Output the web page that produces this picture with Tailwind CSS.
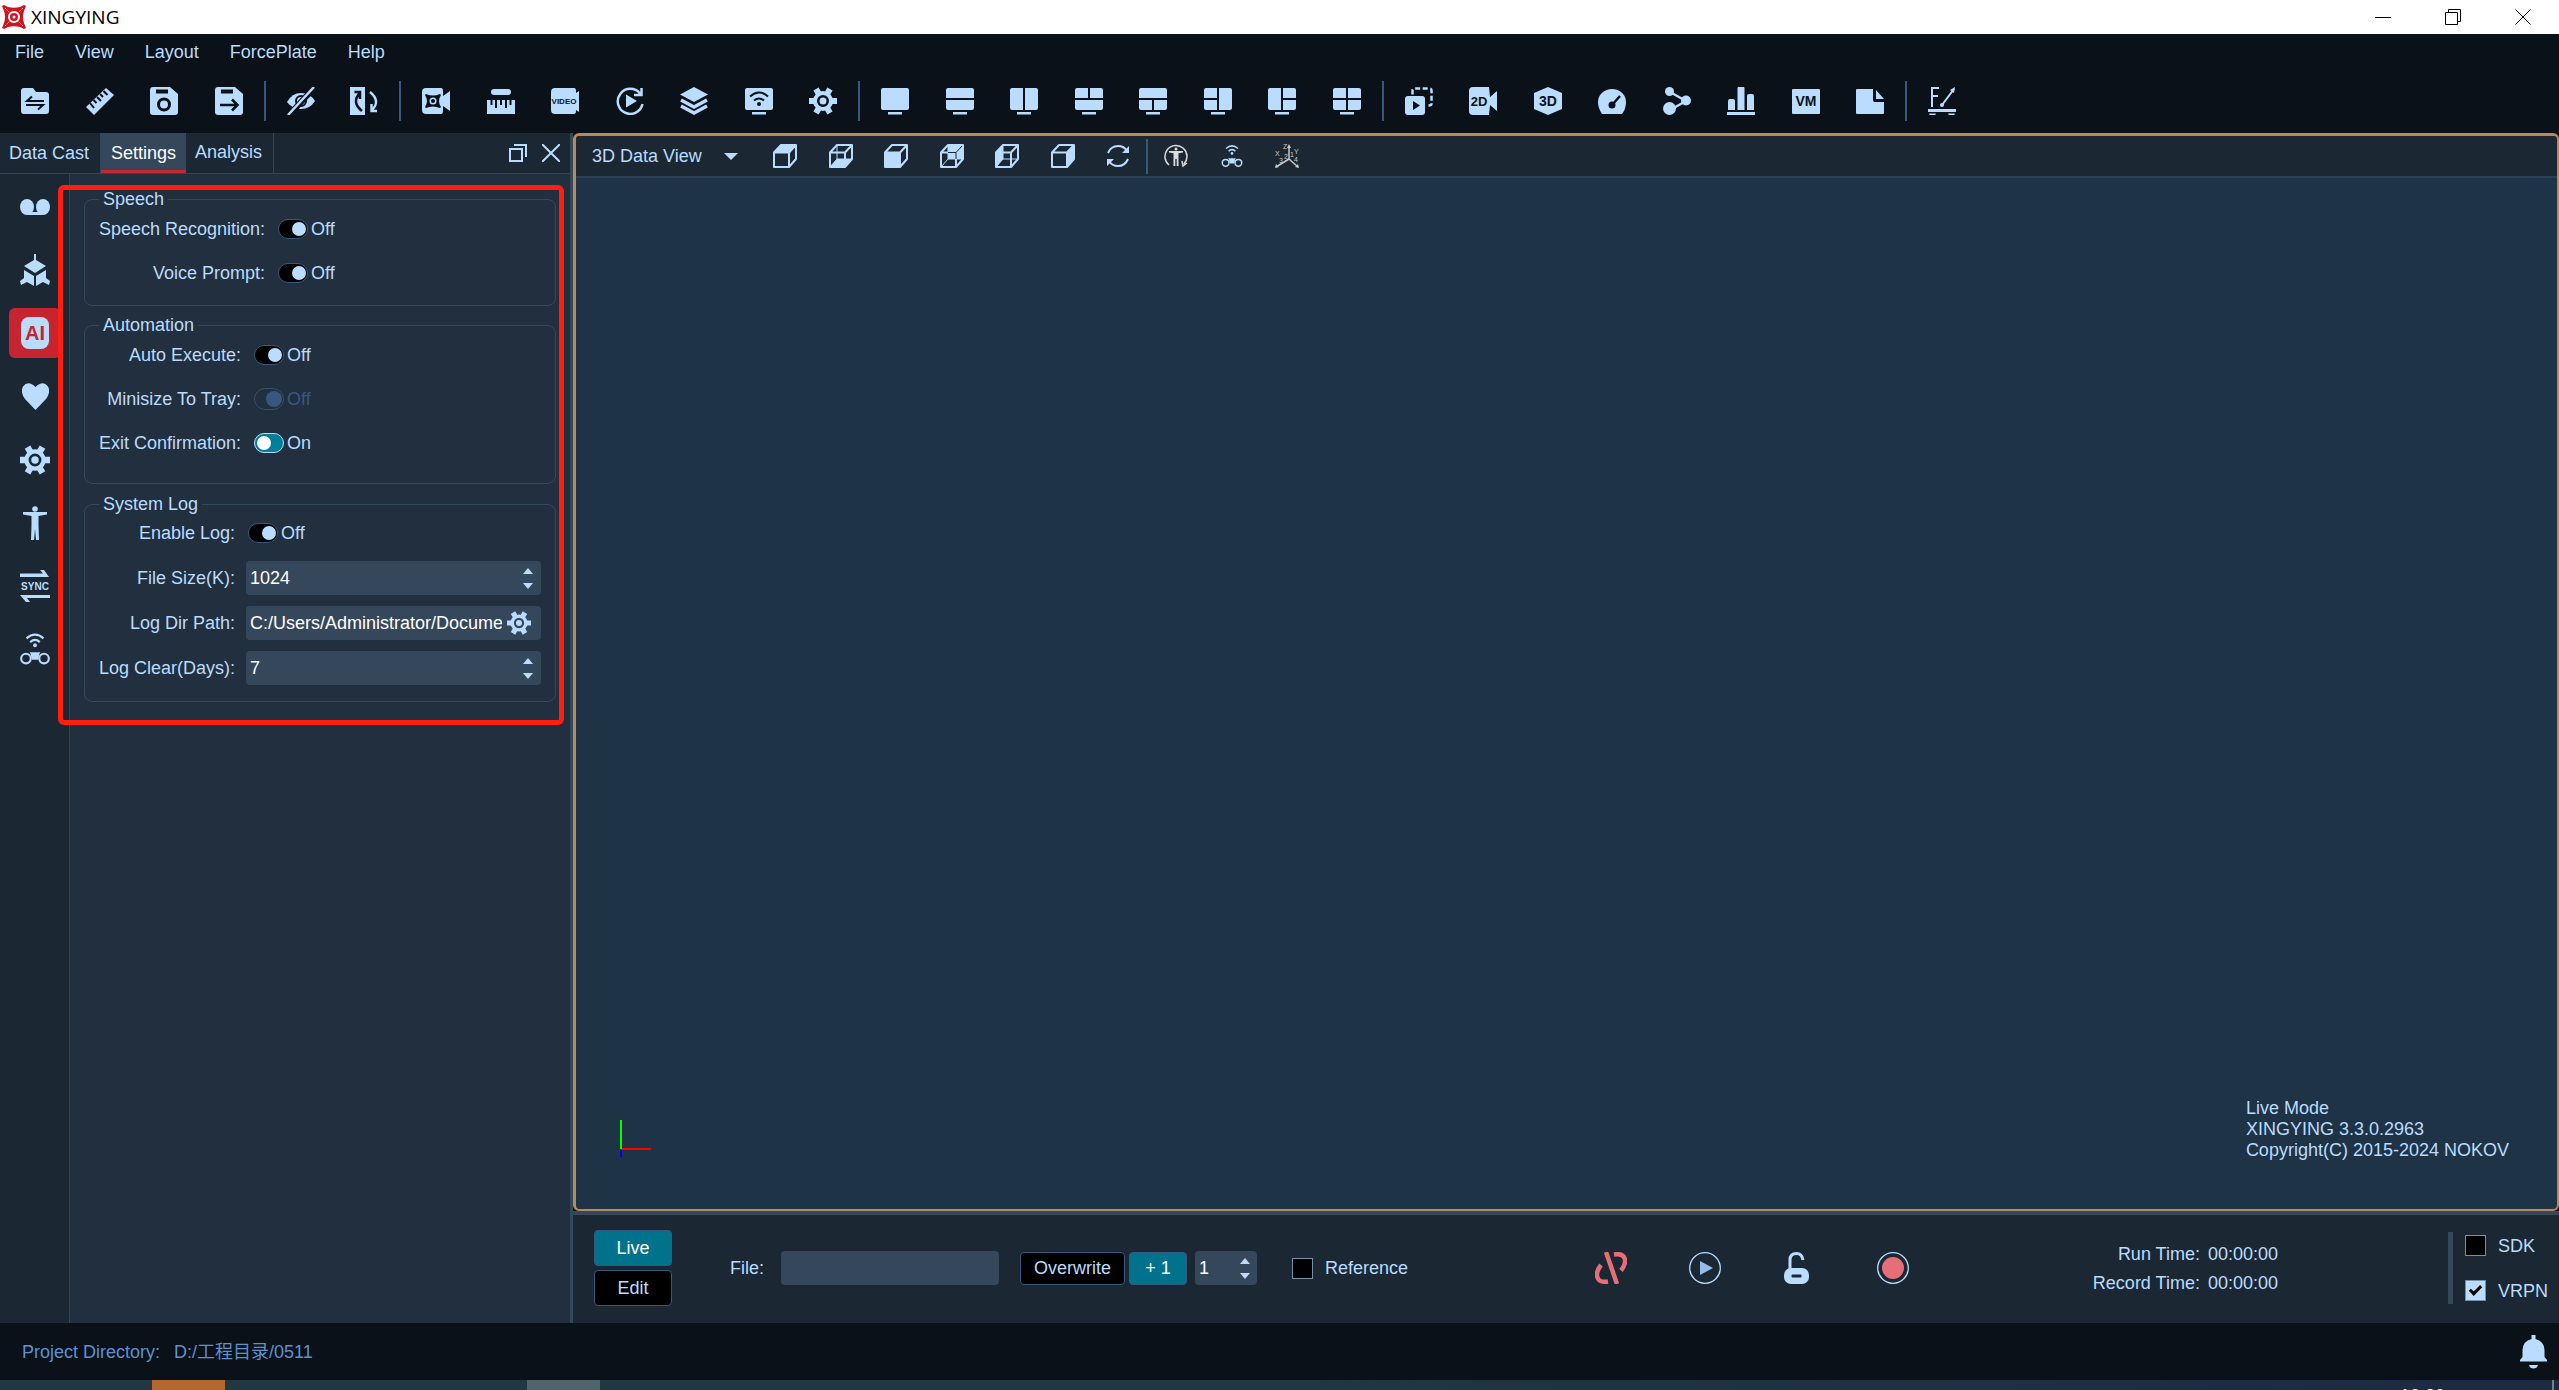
<!DOCTYPE html>
<html lang="en">

<head>
    <meta charset="UTF-8">
    <meta name="viewport" content="width=device-width, initial-scale=1.0">
    <script src="https://cdn.jsdelivr.net/npm/@tailwindcss/browser@4"></script>
    <title>XINGYING</title>
</head>

<body class="flex flex-col h-screen overflow-hidden bg-[#0a1118] text-[#badcff] text-lg leading-6 font-['Liberation_Sans','Noto_Sans_CJK_SC',sans-serif]">

    <!-- shared icons -->
    <svg class="hidden">
        <symbol id="gear" viewBox="0 0 28 28">
            <g fill="none" stroke="currentColor">
                <circle cx="14" cy="14" r="8" stroke-width="4" />
                <path stroke-width="6" d="M0 14h5M23 14h5M18.500 21.800l2.500 4.300M9.500 21.800L7 26.100M18.500 6.200L21 1.900M9.500 6.200L7 1.900" />
            </g>
            <circle cx="14" cy="14" r="3.500" fill="currentColor" />
        </symbol>
        <symbol id="drone" viewBox="0 0 28 32">
            <g fill="none" stroke="currentColor" stroke-width="2">
                <path d="M6 6q8-7 16 0M9.500 9.500q4.500-4 9 0" />
                <circle cx="5.500" cy="25" r="4.500" />
                <circle cx="22.500" cy="25" r="4.500" />
            </g>
            <circle cx="14" cy="12.500" r="1.800" fill="currentColor" />
            <path fill="currentColor" d="M9 19h10l-1 2-1 5h-6l-1-5z" />
        </symbol>
        <symbol id="cube" viewBox="0 0 24 24">
            <path fill="none" stroke="currentColor" stroke-width="2" stroke-linejoin="round" d="M1 8.500L8 1h15v14l-7 8H1zM1 8.500h15V23M16 8.500L23 1" />
        </symbol>
        <symbol id="cubeback" viewBox="0 0 24 24">
            <path fill="none" stroke="currentColor" stroke-width="1" d="M8 1v14h15M8 15l-7 8" />
        </symbol>
        <symbol id="up" viewBox="0 0 10 6">
            <path fill="currentColor" d="M0 6L5 0l5 6z" />
        </symbol>
        <symbol id="down" viewBox="0 0 10 6">
            <path fill="currentColor" d="M0 0h10L5 6z" />
        </symbol>
        <symbol id="stand" viewBox="0 0 28 28">
            <path fill="currentColor" d="M7 25h14v2.500H7z" />
        </symbol>
    </svg>

    <!-- title bar -->
    <header class="flex items-center h-[34px] shrink-0 bg-white text-black pl-[2px]">
        <svg class="size-6" viewBox="0 0 24 24">
            <path fill="#d0141f" d="M0 1l2-1 4 2q6 1.500 12 0l4-2 2 1-2 5q-2 6 0 12l2 5-2 1-4-2q-6-1.500-12 0l-4 2-2-1 2-5q2-6 0-12z" />
            <circle cx="12" cy="12" r="5" fill="none" stroke="#fff" stroke-width="2" />
            <circle cx="12" cy="12" r="1.500" fill="#fff" />
            <path stroke="#fff" stroke-dasharray="1 1.500" d="M3 3l5 5M21 3l-5 5M3 21l5-5M21 21l-5-5" />
        </svg>
        <h1 class="ml-[5px] text-[19px] font-['Open_Sans',sans-serif]">XINGYING</h1>
        <div class="flex items-center gap-[54px] ml-auto pr-[28px]">
            <button type="button" aria-label="Minimize"><svg class="size-4" viewBox="0 0 16 16"><path stroke="#000" d="M0 8.500h16" /></svg></button>
            <button type="button" aria-label="Restore"><svg class="size-4" viewBox="0 0 16 16" fill="none" stroke="#000"><path d="M.5 3.500h12v12H.5zM3.500 3.500v-3h12v12h-3" /></svg></button>
            <button type="button" aria-label="Close"><svg class="size-4" viewBox="0 0 16 16" stroke="#000"><path d="M.5.5l15 15M15.500.5l-15 15" /></svg></button>
        </div>
    </header>

    <!-- menu -->
    <nav class="flex items-center gap-[31px] h-[35px] shrink-0 pl-[15px]">
        <button type="button">File</button>
        <button type="button">View</button>
        <button type="button">Layout</button>
        <button type="button">ForcePlate</button>
        <button type="button">Help</button>
    </nav>

    <!-- toolbar -->
    <div class="flex items-center gap-[21px] h-16 shrink-0 pl-[21px]">
        <div class="flex justify-between w-[222px]">
            <button type="button" aria-label="Open project"><svg class="size-7" viewBox="0 0 28 28"><path fill="currentColor" d="M3 1h9l3 4h10a3 3 0 0 1 3 3v16a3 3 0 0 1-3 3H3a3 3 0 0 1-3-3V4a3 3 0 0 1 3-3z" /><path fill="none" stroke="#0a1118" stroke-width="2" d="M23 14H6l5-4.500M5 18h17l-5 4.500" /></svg></button>
            <button type="button" aria-label="Calibrate"><svg class="size-7" viewBox="0 0 28 28"><path fill="currentColor" d="M0 20L20 1l8 7L8 28z" /><path stroke="#0a1118" stroke-width="2" d="M4 16l4 5M7.500 13l3 3M11 10l4 4M14 7l3 3M17.500 4l4 4" /></svg></button>
            <button type="button" aria-label="Save"><svg class="size-7" viewBox="0 0 28 28"><path fill="currentColor" d="M3 0h17l8 7v18a3 3 0 0 1-3 3H3a3 3 0 0 1-3-3V3a3 3 0 0 1 3-3z" /><path stroke="#0a1118" stroke-width="4" d="M6 4.500h12" /><circle cx="14" cy="17.500" r="5.500" fill="none" stroke="#0a1118" stroke-width="3" /></svg></button>
            <button type="button" aria-label="Save as"><svg class="size-7" viewBox="0 0 28 28"><path fill="currentColor" d="M3 0h17l8 7v18a3 3 0 0 1-3 3H3a3 3 0 0 1-3-3V3a3 3 0 0 1 3-3z" /><path stroke="#0a1118" stroke-width="4" d="M6 4.500h12" /><path fill="none" stroke="#0a1118" stroke-width="2.500" d="M5 18h17M17 12.500l5.500 5.500-5.500 5.500" /></svg></button>
        </div>
        <div class="w-[2px] h-10 bg-[#36587f]"></div>
        <div class="flex justify-between w-[91px]">
            <button type="button" aria-label="Hide"><svg class="size-7" viewBox="0 0 28 28"><path fill="currentColor" d="M0 15Q5 6 14 6t14 8Q23 22 14 22T0 15z" /><circle cx="14" cy="14" r="5" fill="none" stroke="#0a1118" stroke-width="2" /><path stroke="#0a1118" stroke-width="6" d="M2 28L27 1" /><path stroke="currentColor" stroke-width="2.500" d="M1 28L27 0" /></svg></button>
            <button type="button" aria-label="Flip"><svg class="size-7" viewBox="0 0 28 28"><path fill="currentColor" d="M0 0h15v28H0z" /><path fill="none" stroke="#0a1118" stroke-width="2.500" d="M12 24q-11-9-2-18M4.500 5H10v7" /><path fill="none" stroke="currentColor" stroke-width="2.500" d="M20 5q11 9 2 18M27 24h-5.500V17" /></svg></button>
        </div>
        <div class="w-[2px] h-10 bg-[#36587f]"></div>
        <div class="flex justify-between w-[415px]">
            <button type="button" aria-label="Cameras"><svg class="size-7" viewBox="0 0 28 28"><path fill="currentColor" d="M4 1h15q2 0 2 3v5l7-5v20l-7-5v5q0 3-2 3H4a4 4 0 0 1-4-4V5a4 4 0 0 1 4-4z" /><path fill="#0a1118" d="M4 7q7 3 14 0l1 1q-4 6 0 12l-1 1q-7-3-14 0l-1-1q4-6 0-12z" /><circle cx="11" cy="14" r="2.800" fill="none" stroke="currentColor" stroke-width="1.500" /></svg></button>
            <button type="button" aria-label="Wand"><svg class="size-7" viewBox="0 0 28 28"><rect x="4" y="2" width="20" height="6" rx="3" fill="currentColor" /><path fill="currentColor" d="M0 13h28v14H0z" /><path stroke="#0a1118" stroke-width="2" d="M4.500 13v5M9 13v8M14 13v5M19 13v8M23.500 13v5" /></svg></button>
            <button type="button" aria-label="Video"><svg class="size-7" viewBox="0 0 28 28"><path fill="currentColor" d="M4 1h19q2 0 2 3v2l3-2v21l-3-2v1q0 3-2 3H4a4 4 0 0 1-4-4V5a4 4 0 0 1 4-4z" /><text x="13" y="17" text-anchor="middle" fill="#0a1118" class="text-[8px] font-bold">VIDEO</text></svg></button>
            <button type="button" aria-label="Replay"><svg class="size-7" viewBox="0 0 28 28"><path fill="none" stroke="currentColor" stroke-width="2.500" d="M26.500 17A12.500 12.500 0 1 1 24 6.500M25.500 1v7H18" /><path fill="currentColor" d="M10 7.500L21 14l-11 6.500z" /></svg></button>
            <button type="button" aria-label="Layers"><svg class="size-7" viewBox="0 0 28 28"><path fill="currentColor" d="M14 0l14 7.500L14 15 0 7.500z" /><path fill="none" stroke="currentColor" stroke-width="3.500" d="M1 13l13 7 13-7M1 19l13 7 13-7" /></svg></button>
            <button type="button" aria-label="Network"><svg class="size-7" viewBox="0 0 28 28"><rect y="1" width="28" height="22" rx="2" fill="currentColor" /><use href="#stand" /><path fill="none" stroke="#0a1118" stroke-width="2" d="M5 9.500q9-8 18 0M9 13.500q5-4 10 0" /><circle cx="14" cy="17" r="2" fill="#0a1118" /></svg></button>
            <button type="button" aria-label="Settings"><svg class="size-7"><use href="#gear" /></svg></button>
        </div>
        <div class="w-[2px] h-10 bg-[#36587f]"></div>
        <div class="flex justify-between w-[480px]">
            <button type="button" aria-label="One view"><svg class="size-7" viewBox="0 0 28 28"><rect y="1" width="28" height="22" rx="2" fill="currentColor" /><use href="#stand" /></svg></button>
            <button type="button" aria-label="Two rows"><svg class="size-7" viewBox="0 0 28 28"><rect y="1" width="28" height="22" rx="2" fill="currentColor" /><use href="#stand" /><path stroke="#0a1118" stroke-width="2" d="M0 12h28" /></svg></button>
            <button type="button" aria-label="Two columns"><svg class="size-7" viewBox="0 0 28 28"><rect y="1" width="28" height="22" rx="2" fill="currentColor" /><use href="#stand" /><path stroke="#0a1118" stroke-width="2" d="M14 1v22" /></svg></button>
            <button type="button" aria-label="Two above one"><svg class="size-7" viewBox="0 0 28 28"><rect y="1" width="28" height="22" rx="2" fill="currentColor" /><use href="#stand" /><path stroke="#0a1118" stroke-width="2" d="M0 12h28M14 1v11" /></svg></button>
            <button type="button" aria-label="One above two"><svg class="size-7" viewBox="0 0 28 28"><rect y="1" width="28" height="22" rx="2" fill="currentColor" /><use href="#stand" /><path stroke="#0a1118" stroke-width="2" d="M0 12h28M14 12v11" /></svg></button>
            <button type="button" aria-label="Two left, one right"><svg class="size-7" viewBox="0 0 28 28"><rect y="1" width="28" height="22" rx="2" fill="currentColor" /><use href="#stand" /><path stroke="#0a1118" stroke-width="2" d="M0 12h14M14 1v22" /></svg></button>
            <button type="button" aria-label="One left, two right"><svg class="size-7" viewBox="0 0 28 28"><rect y="1" width="28" height="22" rx="2" fill="currentColor" /><use href="#stand" /><path stroke="#0a1118" stroke-width="2" d="M14 12h14M14 1v22" /></svg></button>
            <button type="button" aria-label="Four views"><svg class="size-7" viewBox="0 0 28 28"><rect y="1" width="28" height="22" rx="2" fill="currentColor" /><use href="#stand" /><path stroke="#0a1118" stroke-width="2" d="M0 12h28M14 1v22" /></svg></button>
        </div>
        <div class="w-[2px] h-10 bg-[#36587f]"></div>
        <div class="flex justify-between w-[479px]">
            <button type="button" aria-label="Playback view"><svg class="size-7" viewBox="0 0 28 28"><rect y="9" width="20" height="19" rx="3" fill="currentColor" /><path fill="#0a1118" d="M8 14l7 4.500L8 23z" /><path fill="none" stroke="currentColor" stroke-width="2.500" stroke-dasharray="5 2.500" d="M7.500 7.500V3.500q0-2 2-2h15q2 0 2 2v13q0 2-3 2" /></svg></button>
            <button type="button" aria-label="2D view"><svg class="size-7" viewBox="0 0 28 28"><path fill="currentColor" d="M4 0h16l1 10 7-6v20l-7-6-1 10H4a4 4 0 0 1-4-4V4a4 4 0 0 1 4-4z" /><text x="10" y="19" text-anchor="middle" fill="#0a1118" class="text-[13px] font-bold">2D</text></svg></button>
            <button type="button" aria-label="3D view"><svg class="size-7" viewBox="0 0 28 28"><path fill="currentColor" d="M14 0l14 6v16l-14 6-14-6V6z" /><text x="14" y="19" text-anchor="middle" fill="#0a1118" class="text-[14px] font-bold">3D</text></svg></button>
            <button type="button" aria-label="Gauge"><svg class="size-7" viewBox="0 0 28 28"><path fill="currentColor" d="M4 27Q0 21 0 15a14 13 0 0 1 28 0q0 7-4 12z" /><circle cx="14" cy="18" r="3.500" fill="#0a1118" /><path stroke="#0a1118" stroke-width="2.500" d="M14 18l8-9" /></svg></button>
            <button type="button" aria-label="Nodes"><svg class="size-7" viewBox="0 0 28 28"><path fill="none" stroke="currentColor" stroke-width="2.500" d="M7 5l16 9L7 23" /><circle cx="6.500" cy="4.500" r="4.500" fill="currentColor" /><circle cx="23" cy="13.500" r="5" fill="currentColor" /><circle cx="6.500" cy="21.500" r="6.500" fill="currentColor" /></svg></button>
            <button type="button" aria-label="Chart"><svg class="size-7" viewBox="0 0 28 28"><path fill="currentColor" d="M1 14q0-2 2-2h3q2 0 2 2v9H1zM10.500 1.500q0-2 2-2h3q2 0 2 2V23h-7zM20 9q0-2 2-2h3q2 0 2 2v14h-7zM0 25h28v3H0z" /></svg></button>
            <button type="button" aria-label="Virtual markers"><svg class="size-7" viewBox="0 0 28 28"><rect y="2" width="28" height="25" rx="1" fill="currentColor" /><text x="14" y="19" text-anchor="middle" fill="#0a1118" class="text-[14px] font-bold">VM</text></svg></button>
            <button type="button" aria-label="Notes"><svg class="size-7" viewBox="0 0 28 28"><path fill="currentColor" d="M1 2h16v11q0 2 2 2h9v11q0 1-1 1H1q-1 0-1-1V3q0-1 1-1zM20 3l8 9h-8z" /></svg></button>
        </div>
        <div class="w-[2px] h-10 bg-[#36587f]"></div>
        <button type="button" aria-label="Force plate"><svg class="size-7" viewBox="0 0 28 28"><path fill="none" stroke="currentColor" stroke-width="2" d="M4 20V1h7M4 9h6M14 18L26 2" /><path fill="currentColor" d="M27 0l-1 6-4-3zM0 22h28v3H0zM1 26.500h7l-1 2H2zM20 26.500h7l-1 2h-5z" /><circle cx="14" cy="18" r="2" fill="currentColor" /></svg></button>
    </div>

    <div class="flex flex-1 min-h-0">
        <!-- left dock -->
        <aside class="relative flex flex-col w-[573px] shrink-0 border-r-[3px] border-[#34485c] bg-[#212f3e]">
            <div class="flex items-stretch h-[41px] shrink-0 bg-[#1b2834] border-b border-[#30465a]">
                <button type="button" class="w-[101px] pr-[2px] border-r border-[#30465a]">Data Cast</button>
                <button type="button" class="w-[85px] pt-[2px] bg-[#35475b] text-white border-b-3 border-[#c9252d]">Settings</button>
                <button type="button" class="w-[88px] pr-[2px] pb-[2px] border-r border-[#30465a]">Analysis</button>
                <div class="flex items-center gap-[15px] ml-auto pr-[10px]">
                    <button type="button" aria-label="Float"><svg class="size-[18px]" viewBox="0 0 18 18" fill="none" stroke="currentColor" stroke-width="2"><path d="M1 5h12v12H1zM5 1h12v12" /></svg></button>
                    <button type="button" aria-label="Close panel"><svg class="size-[18px]" viewBox="0 0 18 18" stroke="currentColor" stroke-width="2"><path d="M0 0l18 18M18 0L0 18" /></svg></button>
                </div>
            </div>

            <div class="flex flex-1">
                <nav class="flex flex-col gap-[18px] w-[70px] pl-[9px] pt-[10px] bg-[#1b2834] border-r border-[#30465a]">
                    <button type="button" aria-label="Markers" class="flex items-center justify-center w-[52px] h-[45px]"><svg class="w-[30px] h-4" viewBox="0 0 30 16"><ellipse cx="7" cy="8" rx="7" ry="8" fill="currentColor" /><ellipse cx="23" cy="8" rx="7" ry="8" fill="currentColor" /><path fill="currentColor" d="M7 16l5-3h6l5 3z" /></svg></button>
                    <button type="button" aria-label="Rigid body" class="flex items-center justify-center w-[52px] h-[45px]"><svg class="w-[30px] h-8" viewBox="0 0 30 32"><path fill="currentColor" d="M14 0h2v6l10 6-11 7-11-7 10-6zM4 16l10 6v10l-7-4-6 3-1-4 4-3zM26 16l-10 6v10l7-4 6 3 1-4-4-3z" /></svg></button>
                    <button type="button" aria-label="AI" class="flex items-center justify-center w-[52px] h-[50px] -my-[2px] rounded-md bg-[#c6252f]"><svg class="w-7 h-8" viewBox="0 0 28 32"><rect width="28" height="32" rx="8" fill="currentColor" /><text x="14" y="23" text-anchor="middle" fill="#c6252f" class="text-[20px] font-bold">AI</text></svg></button>
                    <button type="button" aria-label="Favorites" class="flex items-center justify-center w-[52px] h-[45px]"><svg class="w-[27px] h-[27px]" viewBox="0 0 27 27"><path fill="currentColor" d="M13.500 27L3 16Q-2 9 1 3.500q5-6.500 12.500.5Q21-3 26 3.500q3 5.500-2 12.500z" /></svg></button>
                    <button type="button" aria-label="General" class="flex items-center justify-center w-[52px] h-[45px]"><svg class="size-[30px]"><use href="#gear" /></svg></button>
                    <button type="button" aria-label="Skeleton" class="flex items-center justify-center w-[52px] h-[45px]"><svg class="w-6 h-[34px]" viewBox="0 0 24 34"><circle cx="12" cy="3" r="2.800" fill="currentColor" /><path fill="currentColor" d="M0 6h24v2.500l-8.500 1.500v9L16 34h-3l-1-11-1 11H8l.5-15v-9L0 8.500z" /></svg></button>
                    <button type="button" aria-label="Sync" class="flex items-center justify-center w-[52px] h-[45px]"><svg class="w-[30px] h-8" viewBox="0 0 30 32"><path fill="currentColor" d="M0 3.500h23L20 0h4l5 7H0zM30 28H7l3 4H6l-6-7h30z" /><text x="15" y="20" text-anchor="middle" fill="currentColor" class="text-[10px] font-bold">SYNC</text></svg></button>
                    <button type="button" aria-label="Drone" class="flex items-center justify-center w-[52px] h-[45px]"><svg class="w-[30px] h-[34px]"><use href="#drone" /></svg></button>
                </nav>

                <form class="flex-1 pt-[13px] px-[14px]">
                    <fieldset class="h-[119px] px-[14px] border border-[#34485c] rounded-lg">
                        <legend class="px-1">Speech</legend>
                        <div class="grid grid-cols-[166px_auto] justify-start items-center gap-x-[13px] gap-y-5 pt-[6px]">
                            <label for="speech" class="text-right whitespace-nowrap">Speech Recognition:</label>
                            <div class="flex items-center gap-[3px]"><input type="checkbox" id="speech" class="appearance-none flex items-center justify-end w-[30px] h-5 px-px rounded-full bg-black border border-[#36587f] before:size-[14px] before:rounded-full before:bg-[#badcff] before:content-['']"><span>Off</span></div>
                            <label for="voice" class="text-right whitespace-nowrap">Voice Prompt:</label>
                            <div class="flex items-center gap-[3px]"><input type="checkbox" id="voice" class="appearance-none flex items-center justify-end w-[30px] h-5 px-px rounded-full bg-black border border-[#36587f] before:size-[14px] before:rounded-full before:bg-[#badcff] before:content-['']"><span>Off</span></div>
                        </div>
                    </fieldset>

                    <fieldset class="h-[171px] mt-[7px] px-[14px] border border-[#34485c] rounded-lg">
                        <legend class="px-1">Automation</legend>
                        <div class="grid grid-cols-[142px_auto] justify-start items-center gap-x-[13px] gap-y-5 pt-[6px]">
                            <label for="auto" class="text-right whitespace-nowrap">Auto Execute:</label>
                            <div class="flex items-center gap-[3px]"><input type="checkbox" id="auto" class="appearance-none flex items-center justify-end w-[30px] h-5 px-px rounded-full bg-black border border-[#36587f] before:size-[14px] before:rounded-full before:bg-[#badcff] before:content-['']"><span>Off</span></div>
                            <label for="tray" class="text-right whitespace-nowrap">Minisize To Tray:</label>
                            <div class="flex items-center gap-[3px]"><input type="checkbox" id="tray" disabled class="appearance-none flex items-center justify-end w-[30px] h-[22px] px-px rounded-full border border-[#34506f] before:size-4 before:rounded-full before:bg-[#36587f] before:content-['']"><span class="text-[#36587f]">Off</span></div>
                            <label for="exit" class="text-right whitespace-nowrap">Exit Confirmation:</label>
                            <div class="flex items-center gap-[3px]"><input type="checkbox" id="exit" checked class="appearance-none flex items-center w-[30px] h-5 px-[2px] rounded-full bg-[#007f98] border border-[#badcff] before:size-[14px] before:rounded-full before:bg-white before:content-['']"><span>On</span></div>
                        </div>
                    </fieldset>

                    <fieldset class="h-[210px] mt-2 px-[14px] border border-[#34485c] rounded-lg">
                        <legend class="px-1">System Log</legend>
                        <div class="grid grid-cols-[136px_1fr] items-center gap-[11px]">
                            <label for="enablelog" class="text-right whitespace-nowrap">Enable Log:</label>
                            <div class="flex items-center gap-[3px] h-[34px] pl-[2px]"><input type="checkbox" id="enablelog" class="appearance-none flex items-center justify-end w-[30px] h-5 px-px rounded-full bg-black border border-[#36587f] before:size-[14px] before:rounded-full before:bg-[#badcff] before:content-['']"><span>Off</span></div>
                            <label for="filesize" class="text-right whitespace-nowrap">File Size(K):</label>
                            <div class="flex items-center h-[34px] pl-1 pr-2 rounded bg-[#35475b]">
                                <input type="number" id="filesize" value="1024" class="flex-1 min-w-0 text-white outline-none [appearance:textfield]">
                                <div class="flex flex-col gap-[9px]">
                                    <button type="button" aria-label="Increase"><svg class="block w-[10px] h-[6px]"><use href="#up" /></svg></button>
                                    <button type="button" aria-label="Decrease"><svg class="block w-[10px] h-[6px]"><use href="#down" /></svg></button>
                                </div>
                            </div>
                            <label for="logdir" class="text-right whitespace-nowrap">Log Dir Path:</label>
                            <div class="flex items-center gap-[5px] h-[34px] pl-1 pr-[10px] rounded bg-[#35475b]">
                                <input type="text" id="logdir" value="C:/Users/Administrator/Docume" class="flex-1 min-w-0 text-white outline-none">
                                <button type="button" aria-label="Choose folder"><svg class="block size-6"><use href="#gear" /></svg></button>
                            </div>
                            <label for="logclear" class="text-right whitespace-nowrap">Log Clear(Days):</label>
                            <div class="flex items-center h-[34px] pl-1 pr-2 rounded bg-[#35475b]">
                                <input type="number" id="logclear" value="7" class="flex-1 min-w-0 text-white outline-none [appearance:textfield]">
                                <div class="flex flex-col gap-[9px]">
                                    <button type="button" aria-label="Increase"><svg class="block w-[10px] h-[6px]"><use href="#up" /></svg></button>
                                    <button type="button" aria-label="Decrease"><svg class="block w-[10px] h-[6px]"><use href="#down" /></svg></button>
                                </div>
                            </div>
                        </div>
                    </fieldset>
                </form>
            </div>

            <!-- highlight frame over the settings -->
            <div class="absolute left-[58px] top-[52px] w-[506px] h-[540px] border-[5px] border-[#ff1f10] rounded-md pointer-events-none"></div>
        </aside>

        <main class="flex flex-col flex-1 min-w-0">
            <!-- 3D view -->
            <section class="flex flex-col flex-1 min-h-0 border-t-[3px] border-l-[3px] border-r-2 border-b-2 border-[#b88a58] rounded-md bg-[#1f3347]">
                <div class="flex items-center h-[42px] shrink-0 pl-4 bg-[#1b2834] border-b-2 border-[#2b4056] rounded-t">
                    <div class="relative w-[146px]">
                        <select aria-label="View" class="w-full appearance-none outline-none">
                            <option>3D Data View</option>
                        </select>
                        <svg class="absolute right-0 top-[9px] w-[14px] h-[7px] pointer-events-none" viewBox="0 0 14 7"><path fill="currentColor" d="M0 0h14L7 7z" /></svg>
                    </div>
                    <div class="flex justify-between w-[357px] ml-[35px]">
                        <button type="button" aria-label="Top"><svg class="block size-6" viewBox="0 0 24 24"><path fill="currentColor" d="M1 8.500L8 1h15l-7 7.500z" /><use href="#cube" /></svg></button>
                        <button type="button" aria-label="Bottom"><svg class="block size-6" viewBox="0 0 24 24"><path fill="currentColor" d="M1 23l7-8h15l-7 8z" /><use href="#cube" /><use href="#cubeback" /></svg></button>
                        <button type="button" aria-label="Front"><svg class="block size-6" viewBox="0 0 24 24"><path fill="currentColor" d="M1 8.500h15V23H1z" /><use href="#cube" /></svg></button>
                        <button type="button" aria-label="Back"><svg class="block size-6" viewBox="0 0 24 24"><path fill="currentColor" d="M8 1h15v14H8z" /><use href="#cube" /><use href="#cubeback" /><path fill="none" stroke="#1b2834" d="M8 8.500h8V15M16 8.500L22 2" /></svg></button>
                        <button type="button" aria-label="Left"><svg class="block size-6" viewBox="0 0 24 24"><path fill="currentColor" d="M1 8.500L8 1v14l-7 8z" /><use href="#cube" /><use href="#cubeback" /></svg></button>
                        <button type="button" aria-label="Right"><svg class="block size-6" viewBox="0 0 24 24"><path fill="currentColor" d="M16 8.500L23 1v14l-7 8z" /><use href="#cube" /></svg></button>
                        <button type="button" aria-label="Refresh"><svg class="block size-6" viewBox="0 0 24 24"><path fill="none" stroke="currentColor" stroke-width="2" d="M2 9Q5 2 12 2q6 0 9 5M22 15q-3 7-10 7-6 0-9-5" /><path fill="currentColor" d="M23 2v7h-7zM1 22v-7h7z" /></svg></button>
                    </div>
                    <div class="w-[2px] h-[35px] mx-4 bg-[#36587f]"></div>
                    <div class="flex justify-between w-[135px]">
                        <button type="button" aria-label="Body" class="text-[#dcdcdc]"><svg class="block size-6" viewBox="0 0 24 24"><path fill="none" stroke="currentColor" stroke-width="1.500" d="M5 21A11 11 0 1 1 20 20M23 19l-4 3-1-5" /><circle cx="12" cy="5" r="1.500" fill="currentColor" /><path fill="currentColor" d="M5 7h14v1.500l-4.500.8V22h-1.800v-7h-1.400v7H9.500V9.300L5 8.500z" /></svg></button>
                        <button type="button" aria-label="Drone view"><svg class="block size-6"><use href="#drone" /></svg></button>
                        <button type="button" aria-label="Axes" class="text-[#c8c8c8]"><svg class="block size-6" viewBox="0 0 24 24"><path fill="none" stroke="currentColor" stroke-width="1.500" d="M14 15V2M14 15L1 23M14 15l9 8" /><path fill="currentColor" d="M12 4l2-4 2 4zM0 24l1-4 3 3zM24 24l-4-1 3-3z" /><g fill="currentColor" class="text-[7px]"><text x="8" y="5">Z</text><text x="0" y="12">X</text><text x="19" y="10">Y</text><text x="4" y="19">3</text><text x="9" y="15">2</text><text x="15" y="13">1</text><text x="19" y="18">4</text></g></svg></button>
                    </div>
                </div>
                <div class="flex flex-1 items-end justify-between pl-[43px] pr-12 pb-12">
                    <svg class="w-8 h-10 mb-[2px]" viewBox="0 0 32 40"><path stroke="#00f" stroke-width="2" d="M2 30v8" /><path stroke="#f00" stroke-width="2" d="M2 30h30" /><path stroke="#0f0" stroke-width="2" d="M2 1v29" /></svg>
                    <p class="leading-[21px]">Live Mode<br>XINGYING 3.3.0.2963<br>Copyright(C) 2015-2024 NOKOV</p>
                </div>
            </section>

            <!-- record bar -->
            <section class="flex items-center h-[112px] shrink-0 pl-[21px] pr-[11px] pb-[2px] border-t-4 border-[#35475b] bg-[#1b2834]">
                <div class="flex flex-col gap-1">
                    <button type="button" class="w-[78px] h-9 rounded border border-[#36587f] bg-[#00728c] text-white">Live</button>
                    <button type="button" class="w-[78px] h-9 rounded border border-[#36587f] bg-black">Edit</button>
                </div>
                <label for="file" class="ml-[58px]">File:</label>
                <input type="text" id="file" class="w-[218px] h-[34px] ml-[17px] px-1 rounded bg-[#35475b] text-white">
                <button type="button" class="w-[105px] h-[33px] ml-[21px] rounded-sm border border-[#36587f] bg-black">Overwrite</button>
                <button type="button" class="w-[58px] h-[33px] ml-1 rounded-sm border border-[#36587f] bg-[#00728c] text-white">+ 1</button>
                <div class="flex items-center w-[62px] h-[34px] ml-2 pl-1 pr-[7px] rounded bg-[#35475b]">
                    <input type="number" aria-label="Take" value="1" class="flex-1 min-w-0 text-white outline-none [appearance:textfield]">
                    <div class="flex flex-col gap-[9px]">
                        <button type="button" aria-label="Increase"><svg class="block w-[10px] h-[6px]"><use href="#up" /></svg></button>
                        <button type="button" aria-label="Decrease"><svg class="block w-[10px] h-[6px]"><use href="#down" /></svg></button>
                    </div>
                </div>
                <label class="flex items-center gap-3 ml-[35px]"><input type="checkbox" class="appearance-none size-[21px] bg-black border border-[#7590ac]">Reference</label>
                <div class="flex justify-between w-[314px] ml-[187px]">
                    <button type="button" aria-label="Disconnect"><svg class="block size-8" viewBox="0 0 32 32" fill="none" stroke="#e66e76" stroke-width="4.500"><path d="M11 0l11 32M19 2.500c12-2 14 7 7 16M13 29.500C1 31.500-1 22 6 13" /></svg></button>
                    <button type="button" aria-label="Play"><svg class="block size-8" viewBox="0 0 32 32"><circle cx="16" cy="16" r="15.300" fill="none" stroke="currentColor" stroke-width="1.300" /><path fill="#93bce6" d="M11 9l13 7-13 7z" /></svg></button>
                    <button type="button" aria-label="Lock"><svg class="block size-8" viewBox="2 0 32 32"><path fill="none" stroke="currentColor" stroke-width="3" d="M9 18V8q0-6.500 6.500-6.500Q21 1.500 22 8" /><rect x="3" y="16" width="25" height="16" rx="7" fill="currentColor" /><rect x="10.500" y="22.500" width="10" height="3" rx="1" fill="#1b2834" /></svg></button>
                    <button type="button" aria-label="Record"><svg class="block size-8" viewBox="0 0 32 32"><circle cx="16" cy="16" r="15.300" fill="none" stroke="currentColor" stroke-width="1.300" /><circle cx="16" cy="16" r="11" fill="#e66e76" /></svg></button>
                </div>
                <div class="grid grid-cols-[auto_auto] gap-x-2 gap-y-[5px] ml-auto text-right">
                    <span>Run Time:</span><span>00:00:00</span>
                    <span>Record Time:</span><span>00:00:00</span>
                </div>
                <div class="w-[5px] h-[72px] ml-[170px] bg-[#35475b]"></div>
                <div class="flex flex-col gap-[21px] ml-3">
                    <label class="flex items-center gap-3"><input type="checkbox" class="appearance-none size-[21px] bg-black border border-[#7590ac]">SDK</label>
                    <label class="flex items-center gap-3"><input type="checkbox" checked class="appearance-none flex justify-center size-[21px] bg-[#badcff] border border-[#7590ac] after:w-[7px] after:h-3 after:mt-[2px] after:border-black after:border-r-[3px] after:border-b-[3px] after:rotate-45 after:content-['']">VRPN</label>
                </div>
            </section>
        </main>
    </div>

    <!-- status bar -->
    <footer class="flex items-center h-[57px] shrink-0 pl-[22px] pr-3 text-[#5c92cf]">
        <span>Project Directory:</span>
        <span class="ml-[14px]">D:/工程目录/0511</span>
        <button type="button" aria-label="Notifications" class="ml-auto text-[#badcff]"><svg class="block w-[27px] h-[34px]" viewBox="0 0 27 34"><path fill="currentColor" d="M11.500 0h4v4q8.500 2 9 11v7l2.500 3v1.500H0V25l2.500-3v-7q.5-9 9-11zM9 30h9q-1 3.500-4.500 3.500T9 30z" /></svg></button>
    </footer>

    <!-- taskbar -->
    <div class="flex h-[10px] shrink-0 overflow-hidden bg-linear-to-r from-[#223740] via-[#223740] to-[#1c2a42]">
        <div class="w-[73px] ml-[152px] bg-[#b3692d]"></div>
        <div class="w-[73px] ml-[302px] bg-[#51646b]"></div>
        <span class="ml-auto mt-[4px] text-white">10:20</span>
        <div class="w-[2px] ml-[107px] mr-[5px] bg-[#75818f]"></div>
    </div>

</body>

</html>
